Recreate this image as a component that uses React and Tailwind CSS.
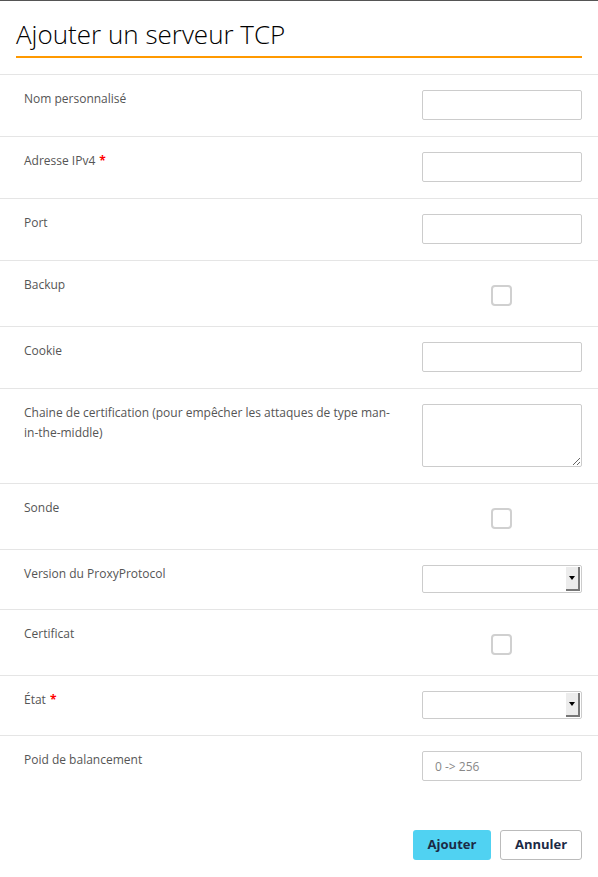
const font = { fontFamily: '"Open Sans", "Liberation Sans", sans-serif' };

const Row = ({ label, required, children }) => (
  <div className="flex border-t border-[#e5e5e5] pl-6 pr-4 pt-[15px] pb-4">
    <div className="-mt-[1px] flex-1 pr-6 text-[12px] leading-[20px] text-[#555]">
      {label}
      {required && <span className="ml-1 font-bold text-[#f00]">*</span>}
    </div>
    <div className="w-[160px] shrink-0">{children}</div>
  </div>
);

const TextInput = ({ placeholder }) => (
  <input
    className="block h-[30px] w-[160px] rounded-[2px] border border-[#ccc] px-3 text-[12px] text-[#555] placeholder:text-[#888] outline-none"
    placeholder={placeholder}
  />
);

const Check = () => (
  <div className="flex h-[34px] justify-center pt-[9px] pr-[2px]">
    <div className="h-[21px] w-[21px] rounded-[4px] border-2 border-[#d0d0d0]" />
  </div>
);

const Select = () => (
  <div className="flex h-[28px] w-[160px] rounded-[2px] border border-[#ccc] bg-white">
    <div className="flex-1" />
    <div className="my-[1px] mr-[1px] flex w-[14px] items-center justify-center border-r-2 border-b-2 border-[#777] bg-[#ececec]">
      <div className="h-0 w-0 border-x-[3px] border-t-[4px] border-x-transparent border-t-black" />
    </div>
  </div>
);

export default function App() {
  return (
    <div className="min-h-[877px] w-[598px] border-t border-[#555] bg-white" style={font}>
      <div className="px-4 pt-[17px]">
        <h1 className="border-b-2 border-[#f90] pb-[6px] text-[26px] font-light leading-[32px] text-black">
          Ajouter un serveur TCP
        </h1>
      </div>
      <div className="mt-[16px]">
        <Row label="Nom personnalisé"><TextInput /></Row>
        <Row label="Adresse IPv4" required><TextInput /></Row>
        <Row label="Port"><TextInput /></Row>
        <Row label="Backup"><Check /></Row>
        <Row label="Cookie"><TextInput /></Row>
        <Row label="Chaine de certification (pour empêcher les attaques de type man-in-the-middle)">
          <textarea className="block h-[63px] w-[160px] rounded-[2px] border border-[#ccc] outline-none" />
        </Row>
        <Row label="Sonde"><Check /></Row>
        <Row label="Version du ProxyProtocol"><Select /></Row>
        <Row label="Certificat"><Check /></Row>
        <Row label="État" required><Select /></Row>
        <Row label="Poid de balancement"><TextInput placeholder="0 -> 256" /></Row>
      </div>
      <div className="mt-[33px] flex justify-end gap-[9px] pr-4">
        <button className="h-[30px] w-[78px] rounded-[3px] bg-[#50d2f2] text-[13px] font-bold text-[#1c2a45]">
          Ajouter
        </button>
        <button className="h-[30px] w-[82px] rounded-[3px] border border-[#bbb] bg-white text-[13px] font-bold text-[#1c2a45]">
          Annuler
        </button>
      </div>
    </div>
  );
}
